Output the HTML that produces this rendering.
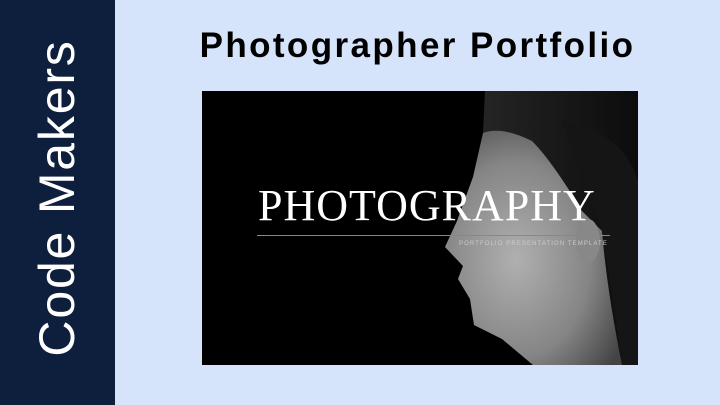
<!DOCTYPE html>
<html><head><style>
body{margin:0;width:720px;height:405px;background:#d6e4fb;position:relative;overflow:hidden;font-family:"Liberation Sans",sans-serif}
.side{position:absolute;left:0;top:0;width:115px;height:405px;background:#0d1f3c}
.side span{position:absolute;left:57px;top:198px;transform:translate(-50%,-50%) rotate(-90deg);color:#fff;font-size:50px;white-space:nowrap;letter-spacing:1.8px}
h1{position:absolute;left:115px;width:605px;top:26px;margin:0;text-align:center;font-size:35px;font-weight:bold;color:#000;letter-spacing:2.4px}
.img{position:absolute;left:202px;top:91px;width:436px;height:274px;background:#000;overflow:hidden}
.t{position:absolute;left:56px;top:93px;font-family:"Liberation Serif",serif;font-size:44px;color:#fff;letter-spacing:1px;line-height:1}
.ln{position:absolute;left:55px;top:144px;width:353px;height:1px;background:#888}
.st{position:absolute;left:257px;top:150px;font-size:6px;color:#ccc;letter-spacing:1.1px}
</style></head><body>
<div class="side"><span>Code Makers</span></div>
<h1>Photographer Portfolio</h1>
<div class="img">
<svg width="436" height="274" style="position:absolute;left:0;top:0">
<defs>
<radialGradient id="f" cx="0.4" cy="0.55" r="0.7">
<stop offset="0" stop-color="#b0b0b0"/><stop offset="0.6" stop-color="#858585"/><stop offset="1" stop-color="#444"/></radialGradient>
<linearGradient id="h" x1="0" y1="0" x2="1" y2="0"><stop offset="0" stop-color="#2a2a2a"/><stop offset="1" stop-color="#0c0c0c"/></linearGradient>
</defs>
<path d="M283 0 L436 0 L436 274 L331 274 L300 248 L272 234 L268 208 L256 188 L261 175 L243 156 L255 130 L271 86 L281 42 Z" fill="url(#h)"/>
<path d="M281 42 Q300 35 330 50 Q350 70 380 120 L400 140 Q405 200 420 274 L331 274 L300 248 L272 234 L268 208 L256 188 L261 175 L243 156 L255 130 L271 86 Z" fill="url(#f)"/>
<ellipse cx="386" cy="150" rx="12" ry="22" fill="#888"/>
<path d="M360 30 Q420 40 436 90 L436 274 L420 274 Q410 200 400 140 Q380 80 360 30 Z" fill="#151515"/>
</svg>
<div class="t">PHOTOGRAPHY</div>
<div class="ln"></div>
<div class="st">PORTFOLIO PRESENTATION TEMPLATE</div>
</div>
</body></html>
